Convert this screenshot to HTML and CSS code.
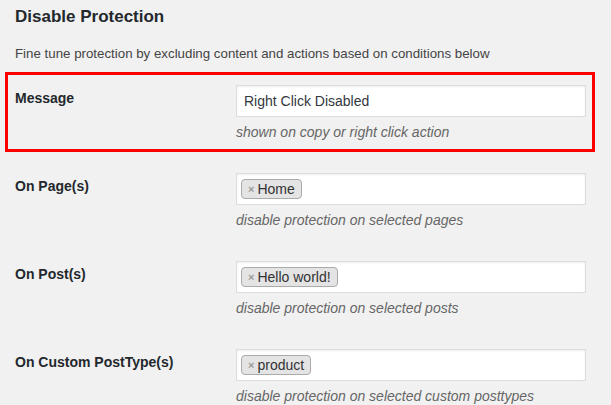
FILE: index.html
```html
<!DOCTYPE html>
<html lang="en">
<head>
<meta charset="UTF-8">
<meta name="viewport" content="width=device-width, initial-scale=1.0">
<title>Disable Protection</title>
<link rel="stylesheet" href="styles.css">
</head>
<body>
  <div class="wrap">
    <h2>Disable Protection</h2>
    <p class="intro">Fine tune protection by excluding content and actions based on conditions below</p>

    <div class="row highlight">
      <label class="row-label" for="message">Message</label>
      <div class="field">
        <input type="text" id="message" name="message" value="Right Click Disabled">
        <p class="hint">shown on copy or right click action</p>
      </div>
    </div>

    <div class="row">
      <div class="row-label">On Page(s)</div>
      <div class="field">
        <div class="tags">
          <span class="tag"><span class="tag-x">&times;</span>Home</span>
        </div>
        <p class="hint">disable protection on selected pages</p>
      </div>
    </div>

    <div class="row">
      <div class="row-label">On Post(s)</div>
      <div class="field">
        <div class="tags">
          <span class="tag"><span class="tag-x">&times;</span>Hello world!</span>
        </div>
        <p class="hint">disable protection on selected posts</p>
      </div>
    </div>

    <div class="row">
      <div class="row-label">On Custom PostType(s)</div>
      <div class="field">
        <div class="tags">
          <span class="tag"><span class="tag-x">&times;</span>product</span>
        </div>
        <p class="hint">disable protection on selected custom posttypes</p>
      </div>
    </div>
  </div>
</body>
</html>
```

FILE: styles.css
```css
body {
  margin: 0;
  padding: 0;
  background: #f1f1f1;
  color: #23282d;
  font-family: "Liberation Sans", Arial, sans-serif;
  font-size: 13px;
}

.wrap {
  padding: 6px 16px 0 15px;
}

h2 {
  margin: 0 0 17px;
  font-size: 17px;
  line-height: 22px;
  font-weight: 700;
}

.intro {
  margin: 0 0 9px;
  font-size: 13.3px;
  line-height: 18px;
  color: #444;
}

.row {
  display: grid;
  grid-template-columns: 221px 350px;
  padding: 10px 0 22px;
}

.row.highlight {
  margin: 0 0 11px -10px;
  padding: 10px 0 8px 7px;
  border: 3px solid #ff0000;
}

.row-label {
  margin-top: 4px;
  font-size: 14px;
  line-height: 18px;
  font-weight: 700;
  color: #23282d;
}

.field input[type="text"],
.tags {
  box-sizing: border-box;
  display: block;
  width: 350px;
  height: 32px;
  margin: 0;
  background: #fff;
  border: 1px solid #ddd;
  box-shadow: inset 0 1px 2px rgba(0, 0, 0, 0.07);
}

.field input[type="text"] {
  padding: 0 7px;
  font-family: inherit;
  font-size: 14px;
  color: #32373c;
}

.tags {
  padding: 5px 4px 0;
}

.tag {
  display: inline-flex;
  align-items: center;
  height: 20px;
  box-sizing: border-box;
  padding: 0 6px;
  background: #e4e4e4;
  border: 1px solid #aaa;
  border-radius: 4px;
  font-size: 14px;
  color: #333;
}

.tag-x {
  margin-right: 3px;
  font-weight: 700;
  font-size: 11px;
  color: #999;
}

.hint {
  margin: 6px 0 0;
  font-size: 14px;
  line-height: 18px;
  font-style: italic;
  color: #666;
}
```
